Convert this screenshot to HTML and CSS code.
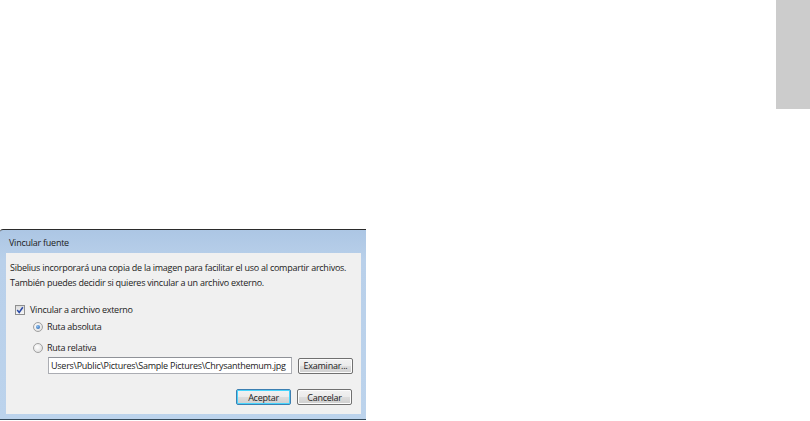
FILE: index.html
```html
<!DOCTYPE html>
<html>
<head>
    <title>Vincular fuente</title>
    <link rel="stylesheet" href="styles.css">
</head>
<body>
    <div class="page">
        <div class="window">
            <div class="titlebar">Vincular fuente</div>
            <div class="client">
                <p class="intro">Sibelius incorporará una copia de la imagen para facilitar el uso al compartir archivos.</p>
                <p class="intro">También puedes decidir si quieres vincular a un archivo externo.</p>

                <label class="option check-row">
                    <span class="checkbox">
                        <svg width="8" height="8" viewBox="0 0 8 8"><path d="M1.2 4 L3.2 6.4 L6.8 1.2" fill="none" stroke="#2a4aa8" stroke-width="1.5"/></svg>
                    </span>
                    Vincular a archivo externo
                </label>
                <label class="option radio-row first">
                    <span class="radio checked"><span class="dot"></span></span>
                    Ruta absoluta
                </label>
                <label class="option radio-row">
                    <span class="radio"></span>
                    Ruta relativa
                </label>

                <div class="path-row">
                    <div class="field">Users\Public\Pictures\Sample Pictures\Chrysanthemum.jpg</div>
                    <button class="btn">Examinar...</button>
                </div>

                <div class="actions">
                    <button class="btn default">Aceptar</button>
                    <button class="btn">Cancelar</button>
                </div>
            </div>
        </div>
        <div class="side-tab"></div>
    </div>
</body>
</html>
```

FILE: styles.css
```css
body {
    margin: 0;
    background: #fff;
    font-family: 'Open Sans', 'DejaVu Sans', sans-serif;
    font-size: 9px;
    letter-spacing: -0.25px;
    color: #222;
}

.page {
    display: flex;
    justify-content: space-between;
    align-items: flex-start;
    width: 810px;
    height: 421px;
    overflow: hidden;
}

.window {
    margin-top: 229px;
    width: 366px;
    height: 191px;
    border-top: 1px solid #2b2b2b;
    border-bottom: 1px solid #34495a;
    border-top-left-radius: 3px;
    background: linear-gradient(180deg, #acc6e4 0%, #b9d0ea 30px, #bcd3ec 100%);
    display: flex;
    flex-direction: column;
    padding: 0 5px 5px 6px;
    box-sizing: border-box;
}

.titlebar {
    height: 23px;
    line-height: 25px;
    padding-left: 3px;
    color: #1c1c1c;
}

.client {
    flex: 1;
    background: #f0f0f0;
    padding: 9px 0 0 4px;
    display: flex;
    flex-direction: column;
}

.intro {
    margin: 0 0 4px;
    line-height: 11px;
    white-space: nowrap;
}

.option {
    display: flex;
    align-items: center;
    gap: 5px;
    height: 11px;
}

.check-row {
    margin-top: 12px;
    padding-left: 5px;
}

.radio-row {
    padding-left: 23px;
    gap: 4px;
    margin-top: 10px;
}

.radio-row.first {
    margin-top: 6px;
}

.checkbox {
    width: 8px;
    height: 8px;
    border: 1px solid #8e8f8f;
    background: linear-gradient(180deg, #dcdcdc, #f6f6f6);
    display: flex;
    align-items: center;
    justify-content: center;
}

.radio {
    width: 8px;
    height: 8px;
    border: 1px solid #a0a0a0;
    border-radius: 50%;
    background: radial-gradient(circle at 40% 40%, #fff, #d8d8d8);
    display: flex;
    align-items: center;
    justify-content: center;
}

.radio .dot {
    width: 4px;
    height: 4px;
    border-radius: 50%;
    background: radial-gradient(circle at 40% 35%, #8ec0f0, #1d5aa8);
}

.path-row {
    display: flex;
    align-items: center;
    gap: 6px;
    margin-top: 4px;
    padding-left: 38px;
}

.field {
    width: 244px;
    height: 17px;
    box-sizing: border-box;
    border: 1px solid #abadb3;
    border-top-color: #8f9298;
    background: #fff;
    padding-left: 2px;
    line-height: 15px;
    white-space: nowrap;
    overflow: hidden;
}

.btn {
    font-family: inherit;
    font-size: 9px;
    letter-spacing: -0.25px;
    color: #222;
    width: 55px;
    height: 16px;
    padding: 0;
    border: 1px solid #707070;
    border-radius: 2px;
    background: linear-gradient(180deg, #f2f2f2 0%, #ebebeb 50%, #dddddd 51%, #cfcfcf 100%);
    box-shadow: inset 0 0 0 1px #fcfcfc;
}

.btn.default {
    border-color: #3c7fb1;
    box-shadow: inset 0 0 0 1px #48d4fc;
}

.actions {
    display: flex;
    justify-content: flex-end;
    gap: 6px;
    margin-top: 15px;
    padding-right: 9px;
}

.side-tab {
    width: 34px;
    height: 109px;
    background: #cccccc;
}
```
